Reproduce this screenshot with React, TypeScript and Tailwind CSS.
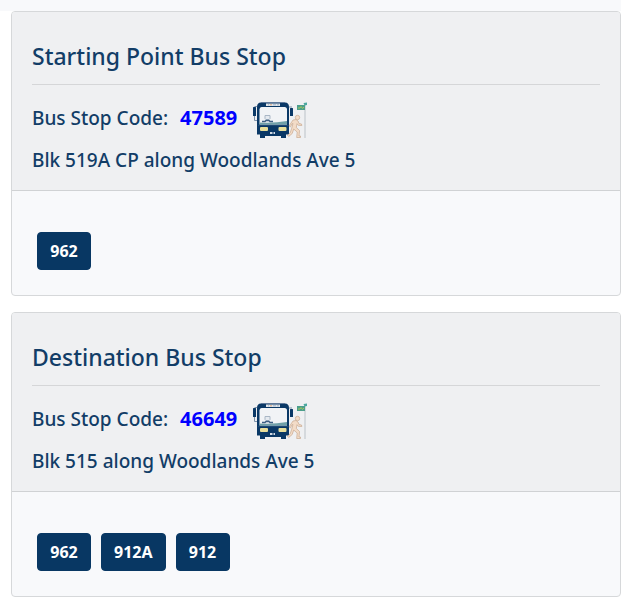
type Stop = {
  title: string;
  code: string;
  address: string;
  services: string[];
};

const stops: Stop[] = [
  {
    title: "Starting Point Bus Stop",
    code: "47589",
    address: "Blk 519A CP along Woodlands Ave 5",
    services: ["962"],
  },
  {
    title: "Destination Bus Stop",
    code: "46649",
    address: "Blk 515 along Woodlands Ave 5",
    services: ["962", "912A", "912"],
  },
];

function BusIcon() {
  return (
    <svg viewBox="0 0 54 36" className="h-9 w-[54px] shrink-0" role="img" aria-label="Bus arriving">
      {/* mirrors */}
      <path d="M4 4.500H1.500M1.500 14V18.500H4" fill="none" stroke="#7f93aa" strokeWidth="1" />
      <path d="M36 5h3" stroke="#7f93aa" strokeWidth="1" />
      <rect x="0" y="5" width="3" height="9" rx="0.500" fill="#0a3866" />
      <rect x="37" y="6" width="3" height="8" rx="0.500" fill="#0a3866" />
      {/* body */}
      <path d="M8 0.500H32Q36 0.500 36 5V32.500H33V36H28V34H12V36H7V32.500H4V5Q4 0.500 8 0.500Z" fill="#0a3866" />
      <rect x="8" y="0" width="24" height="1" fill="#60799a" />
      {/* route display */}
      <rect x="13" y="1.500" width="14" height="2.500" fill="#dfe4ea" />
      <path d="M15 2.800h1M20 2.800h3M24 2.800h2" stroke="#a4b2c2" strokeWidth="1" />
      <path d="M17 2.800h2" stroke="#dfa97c" strokeWidth="1" />
      {/* windscreen */}
      <path d="M8.500 5H31.500Q34 5 34 7.500V22.500H6.500V7.500Q6.500 5 8.500 5Z" fill="#f1f3f6" />
      <path d="M6.500 20.500Q20 21.500 34 19V22.500H6.500Z" fill="#6fa0a8" />
      {/* driver */}
      <path d="M12 13.500h5v3l-1 1h-3l-1-1z" fill="#e5eaf0" stroke="#a9b6c5" strokeWidth="1" />
      <path d="M9 19.500h3l1-1h3l1 1h3" fill="none" stroke="#3d5f83" strokeWidth="1.500" />
      {/* lights and plate */}
      <rect x="7" y="25" width="8" height="4" rx="1" fill="#e9df9c" />
      <rect x="25.500" y="25" width="8" height="4" rx="1" fill="#e9df9c" />
      <path d="M5 23.500h30" stroke="#1d4873" strokeWidth="1" />
      <path d="M17 31h2.500M20.500 31h1.500" stroke="#d3dbe5" strokeWidth="1.800" />
      {/* passenger */}
      <g fill="#f3dcc8" stroke="#c9a98f" strokeWidth="0.700" strokeLinejoin="round">
        <circle cx="44.500" cy="15.500" r="2.200" />
        <path d="M40 18l3-.5 2 1.500 1 2.500 2.500.5.3 1.500-3.500-.2-1.300-1.600-.7 3.800 3.200 3-.5 5.500h1.500v1.500h-3.800l.5-5.500-3.500-3-1.500 4.500-3.500 3-1.200-1.200 2.700-2.500 1.500-4.500 1.300-4.800-1 .3-1.500 3-1.500-.8z" />
      </g>
      {/* bus stop pole and flag */}
      <path d="M52 2.500V36" stroke="#cdd2d6" strokeWidth="1.500" />
      <path d="M50.500 1l3.500-.5v2.500l-2.500.5z" fill="#4aa8a0" />
      <rect x="44" y="3" width="8" height="5" fill="#4c9f8b" />
      <path d="M45 6h2l1-1.500 1.500 2 1.500-1.500" fill="none" stroke="#a5c45f" strokeWidth="1" />
    </svg>
  );
}

function StopCard({ title, code, address, services }: Stop) {
  return (
    <section className="overflow-hidden rounded border border-[#d6d8da] bg-[#f8f9fb] text-[#123d67]">
      <header className="border-b border-[#d0d2d4] bg-[#eff0f2] px-5 pt-7 pb-4">
        <h4 className="text-[23px] leading-8 font-medium">{title}</h4>
        <hr className="mt-3 mb-[17px] border-[#d5d6d8]" />
        <div className="flex h-9 items-start text-[19px] leading-8 font-medium">
          <span>Bus Stop Code:</span>
          <a href={`#${code}`} className="ml-3 text-xl leading-8 font-bold text-[#0000ff]">
            {code}
          </a>
          <span className="ml-4 flex">
            <BusIcon />
          </span>
        </div>
        <p className="mt-2 text-[19px] leading-7 font-medium">{address}</p>
      </header>
      <div className="flex flex-wrap gap-2.5 px-[25px] pt-[41px] pb-[25px]">
        {services.map((service) => (
          <button
            key={service}
            type="button"
            className="h-[38px] min-w-[54px] rounded border border-[#083763] bg-[#083763] px-3 text-base leading-6 font-bold text-white"
          >
            {service}
          </button>
        ))}
      </div>
    </section>
  );
}

export default function App() {
  return (
    <main className="min-h-screen bg-white font-['Noto_Sans',sans-serif]">
      <div className="mr-[5px] h-[11px] bg-[#f8f9fb]" />
      <div className="mr-[5px] ml-[11px] flex flex-col gap-4">
        {stops.map((stop) => (
          <StopCard key={stop.title} {...stop} />
        ))}
      </div>
    </main>
  );
}
